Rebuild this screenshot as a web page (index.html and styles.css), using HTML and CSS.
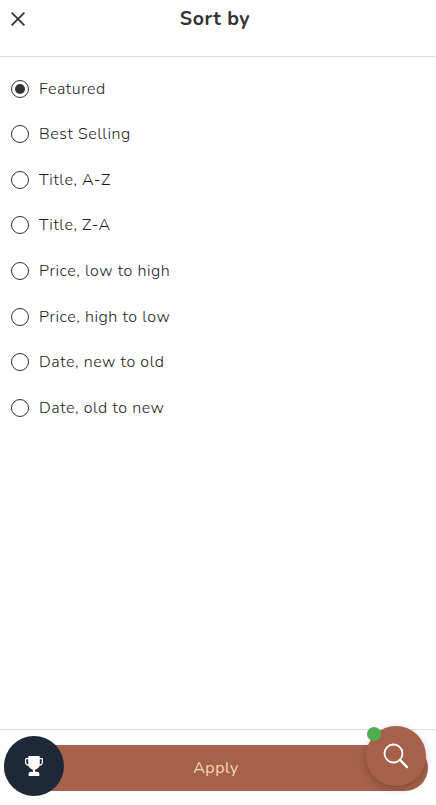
FILE: index.html
```html
<!DOCTYPE html>
<html lang="en">
<head>
  <meta charset="UTF-8">
  <meta name="viewport" content="width=device-width, initial-scale=1">
  <title>Sort by</title>
  <link rel="stylesheet" href="styles.css">
</head>
<body>
  <form class="drawer">
    <header class="drawer-header">
      <button type="button" class="close-button" aria-label="Close">
        <svg width="14" height="14" viewBox="0 0 14 14"><path d="M.6.6l12.8 12.8M13.4.6L.6 13.4" fill="none" stroke="#333" stroke-width="1.8"/></svg>
      </button>
      <h2>Sort by</h2>
    </header>

    <div class="sort-list">
      <label class="sort-option"><input type="radio" name="sort" checked><span>Featured</span></label>
      <label class="sort-option"><input type="radio" name="sort"><span>Best Selling</span></label>
      <label class="sort-option"><input type="radio" name="sort"><span>Title, A-Z</span></label>
      <label class="sort-option"><input type="radio" name="sort"><span>Title, Z-A</span></label>
      <label class="sort-option"><input type="radio" name="sort"><span>Price, low to high</span></label>
      <label class="sort-option"><input type="radio" name="sort"><span>Price, high to low</span></label>
      <label class="sort-option"><input type="radio" name="sort"><span>Date, new to old</span></label>
      <label class="sort-option"><input type="radio" name="sort"><span>Date, old to new</span></label>
    </div>

    <footer class="drawer-footer">
      <button type="button" class="apply-button">Apply</button>
    </footer>
  </form>

  <!-- Floating widgets -->
  <button type="button" class="rewards-button" aria-label="Rewards">
    <svg width="18" height="20" viewBox="0 0 18 20">
      <path d="M4 2.600H1.300Q.6 2.600 .6 3.400V6Q.6 9.400 4.800 9.400M14 2.600h2.700q.7 0 .7.8V6q0 3.400-4.200 3.400" fill="none" stroke="#fff" stroke-width="1.2"/>
      <path d="M4 0h10q.8 0 .8 1v6.500q0 5-4.700 6.200v2.100h1.700q2.600 0 2.600 2.200v2H3.600v-2q0-2.200 2.600-2.200h1.700v-2.100Q3.200 12.500 3.200 7.500V1Q3.200 0 4 0z" fill="#fff"/>
    </svg>
  </button>
  <button type="button" class="search-button" aria-label="Search">
    <svg width="26" height="26" viewBox="0 0 26 26"><circle cx="10.500" cy="10.500" r="9" fill="none" stroke="#fff" stroke-width="1.8"/><path d="M16.900 16.900l7.200 7.200" stroke="#fff" stroke-width="2.200" stroke-linecap="round"/></svg>
    <span class="status-dot"></span>
  </button>
</body>
</html>
```
FILE: styles.css
```css
* {
  box-sizing: border-box;
}

body {
  margin: 0;
  background-color: #fff;
  color: #333;
  font-family: Nunito, "Open Sans", sans-serif;
  font-size: 16px;
}

button {
  padding: 0;
  border: none;
  font-family: inherit;
  cursor: pointer;
}

svg {
  display: block;
}

.drawer {
  display: flex;
  flex-direction: column;
  height: 100vh;
}

.drawer-header {
  display: grid;
  grid-template-columns: 36px 1fr 42px;
  height: 57px;
  border-bottom: 1px solid #dedede;
}

.close-button {
  align-self: start;
  padding: 12px 0 0 11px;
  background: none;
}

.drawer-header h2 {
  margin: 5px 0 0;
  font-size: 19.5px;
  line-height: 28px;
  font-weight: 700;
  letter-spacing: 0.6px;
  text-align: center;
}

.sort-list {
  flex: 1;
  padding: 8.75px 11px 0;
}

.sort-option {
  display: flex;
  align-items: center;
  gap: 10px;
  height: 45.62px;
  color: #1c1c1c;
  font-weight: 300;
  letter-spacing: 0.56px;
  cursor: pointer;
}

.sort-option input {
  appearance: none;
  flex: none;
  display: grid;
  place-items: center;
  width: 18px;
  height: 18px;
  margin: 0;
  border: 1px solid #333;
  border-radius: 50%;
}

.sort-option input:checked::before {
  content: "";
  width: 10px;
  height: 10px;
  border-radius: 50%;
  background-color: #333;
}

.drawer-footer {
  height: 76px;
  padding: 15px 8px 0 4px;
  border-top: 1px solid #dedede;
}

.apply-button {
  display: block;
  width: 100%;
  height: 46px;
  border-radius: 23px;
  background-color: #a6614a;
  color: #f5d9b0;
  font-size: 16px;
  letter-spacing: 0.5px;
}

.rewards-button,
.search-button {
  position: fixed;
  display: flex;
  align-items: center;
  justify-content: center;
  width: 60px;
  height: 60px;
  border-radius: 50%;
}

.rewards-button {
  left: 4px;
  bottom: 9px;
  background-color: #1d2939;
}

.search-button {
  right: 10px;
  bottom: 19px;
  background-color: #a6614a;
  box-shadow: 0 3px 8px rgba(0, 0, 0, 0.22);
}

.status-dot {
  position: absolute;
  top: 1px;
  left: 1px;
  width: 14px;
  height: 14px;
  border-radius: 50%;
  background-color: #4caf50;
}
```
